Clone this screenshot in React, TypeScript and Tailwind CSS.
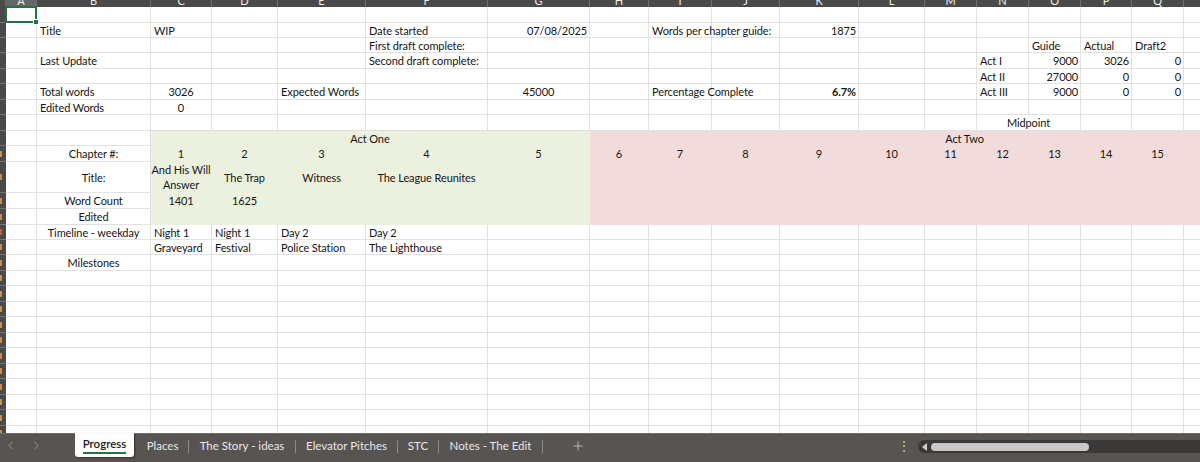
import { Fragment } from "react";
import { ChevronLeft, ChevronRight, Plus } from "lucide-react";

const COLS = ["A", "B", "C", "D", "E", "F", "G", "H", "I", "J", "K", "L", "M", "N", "O", "P", "Q", "R", "S", "T"];
const ROW_COUNT = 27;

type Cell = { t: string; a?: "l" | "c" | "r"; bold?: boolean; span?: string; cols?: number };

const CELLS: Record<string, Cell> = {
  "2B": { t: "Title" },
  "2C": { t: "WIP" },
  "2F": { t: "Date started" },
  "2G": { t: "07/08/2025", a: "r" },
  "2I": { t: "Words per chapter guide:" },
  "2K": { t: "1875", a: "r" },
  "3F": { t: "First draft complete:" },
  "3O": { t: "Guide" },
  "3P": { t: "Actual" },
  "3Q": { t: "Draft2" },
  "4B": { t: "Last Update" },
  "4F": { t: "Second draft complete:" },
  "4N": { t: "Act I" },
  "4O": { t: "9000", a: "r" },
  "4P": { t: "3026", a: "r" },
  "4Q": { t: "0", a: "r" },
  "5N": { t: "Act II" },
  "5O": { t: "27000", a: "r" },
  "5P": { t: "0", a: "r" },
  "5Q": { t: "0", a: "r" },
  "6B": { t: "Total words" },
  "6C": { t: "3026", a: "c" },
  "6E": { t: "Expected Words" },
  "6G": { t: "45000", a: "c" },
  "6I": { t: "Percentage Complete" },
  "6K": { t: "6.7%", a: "r", bold: true },
  "6N": { t: "Act III" },
  "6O": { t: "9000", a: "r" },
  "6P": { t: "0", a: "r" },
  "6Q": { t: "0", a: "r" },
  "7B": { t: "Edited Words" },
  "7C": { t: "0", a: "c" },
  "8N": { t: "Midpoint", a: "c", span: "col-span-2", cols: 2 },
  "9C": { t: "Act One", a: "c", span: "col-span-5", cols: 5 },
  "9H": { t: "Act Two", a: "c", span: "col-span-13", cols: 13 },
  "10B": { t: "Chapter #:", a: "c" },
  "11B": { t: "Title:", a: "c" },
  "11C": { t: "And His Will\nAnswer", a: "c" },
  "11D": { t: "The Trap", a: "c" },
  "11E": { t: "Witness", a: "c" },
  "11F": { t: "The League Reunites", a: "c" },
  "12B": { t: "Word Count", a: "c" },
  "12C": { t: "1401", a: "c" },
  "12D": { t: "1625", a: "c" },
  "13B": { t: "Edited", a: "c" },
  "14B": { t: "Timeline - weekday", a: "c" },
  "14C": { t: "Night 1" },
  "14D": { t: "Night 1" },
  "14E": { t: "Day 2" },
  "14F": { t: "Day 2" },
  "15C": { t: "Graveyard" },
  "15D": { t: "Festival" },
  "15E": { t: "Police Station" },
  "15F": { t: "The Lighthouse" },
  "16B": { t: "Milestones", a: "c" },
};

// chapter numbers 1..15 across C..Q
COLS.slice(2, 17).forEach((l, i) => {
  CELLS[`10${l}`] = { t: String(i + 1), a: "c" };
});

const TABS = [
  { name: "Places", w: "w-[51px]" },
  { name: "The Story - ideas", w: "w-[106px]" },
  { name: "Elevator Pitches", w: "w-[101px]" },
  { name: "STC", w: "w-[40px]" },
  { name: "Notes - The Edit", w: "w-[103px]" },
];

function fillOf(r: number, c: number) {
  if (r < 9 || r > 13) return "";
  if (c >= 2 && c <= 6) return "bg-[#ebf1de] border-[#ebf1de]";
  if (c >= 7) return "bg-[#f2dcdb] border-[#f2dcdb]";
  return "";
}

function SheetRow({ r }: { r: number }) {
  const out = [];
  let skip = 0;
  for (let c = 0; c < COLS.length; c++) {
    if (skip > 0) {
      skip--;
      continue;
    }
    const cell = CELLS[`${r}${COLS[c]}`];
    if (cell?.cols) skip = cell.cols - 1;
    const fill = fillOf(r, c) || "border-[#e1e1e1]";
    const align = cell?.a === "c" ? "justify-center text-center" : cell?.a === "r" ? "justify-end pr-[2px]" : "justify-start pl-[3px]";
    out.push(
      <div
        key={c}
        className={`relative flex items-center whitespace-pre border-r border-b leading-[15px] ${fill} ${align} ${cell?.span ?? ""} ${cell?.bold ? "font-bold" : ""}`}
      >
        {cell?.t}
        {r === 1 && c === 0 && (
          <div className="absolute -inset-px z-10 border-2 border-[#217346]">
            <span className="absolute -right-[4px] -bottom-[4px] h-[6px] w-[6px] border border-white bg-[#217346]" />
          </div>
        )}
      </div>
    );
  }
  return <>{out}</>;
}

export default function App() {
  const rows = Array.from({ length: ROW_COUNT }, (_, i) => i + 1);

  return (
    <div className="h-[462px] w-[1200px] overflow-hidden bg-white font-[Lato,'Noto_Sans',sans-serif] text-[11px] tracking-[-0.1px] text-[#151515]">
      {/* Sheet grid */}
      <div className="h-[433px] overflow-hidden">
        <div className="grid w-max grid-cols-[6px_31px_114px_61px_66px_88px_122px_102px_59px_63px_68px_79px_66px_52px_52px_52px_51px_52px_52px_52px_52px] grid-rows-[7px_16px_15px_15px_16px_15px_16px_15px_16px_15px_16px_31px_16px_16px_15px_15px_16px_15px_16px_15px_16px_15px_16px_15px_16px_15px_16px_15px]">
          <div className="border-r border-[#6f6f6f] bg-[#4a4a4a]" />
          {COLS.map((l, i) => (
            <div
              key={l}
              className={`flex items-end justify-center overflow-hidden border-r border-[#707070] ${i === 0 ? "bg-[#666]" : "bg-[#4a4a4a]"}`}
            >
              <span className="mb-px leading-none text-[#eee]">{l}</span>
            </div>
          ))}
          {rows.map((r) => (
            <Fragment key={r}>
              <div className="flex items-center border-b border-[#747474] bg-[#4a4a4a]">
                {r >= 10 && <span className={`h-[6px] w-[2px] ${r === 14 ? "bg-[#c9574a]" : "bg-[#c98d48]"}`} />}
              </div>
              <SheetRow r={r} />
            </Fragment>
          ))}
        </div>
      </div>

      {/* Sheet tabs bar */}
      <div className="flex h-[29px] border-t border-[#6e6b69] bg-[#575452] text-[11.5px] tracking-normal text-[#e8e8e8]">
        <div className="flex w-[75px] items-start gap-[13px] pt-[5px] pl-[4px] text-[#a9a9a9]">
          <ChevronLeft size={13} strokeWidth={1.5} />
          <ChevronRight size={13} strokeWidth={1.5} />
        </div>
        <div className="-mt-px flex h-[24px] w-[59px] items-center justify-center rounded-b-[3px] bg-white shadow-[1px_1px_2px_rgba(0,0,0,0.4)]">
          <span className="border-b-2 border-[#217346] pb-px font-semibold leading-[14px] text-[#1b1b1b]">Progress</span>
        </div>
        <div className="ml-[3px] flex items-start">
          {TABS.map((tab) => (
            <div key={tab.name} className="flex items-start pt-[5px]">
              <div className={`${tab.w} text-center leading-[14px]`}>{tab.name}</div>
              <span className="mt-px h-[13px] w-px bg-[#8c8986]" />
            </div>
          ))}
        </div>
        <div className="flex w-[70px] items-start justify-center pt-[5px] text-[#d8d8d8]">
          <Plus size={14} strokeWidth={1.25} />
        </div>
        <div className="flex-1" />
        <div className="flex w-[14px] items-start justify-center pt-[6px] text-[12px] leading-[12px] text-[#cfcfcf]">⋮</div>
        <div className="mt-[6px] ml-[7px] flex h-[13px] w-[282px] items-center rounded-l-full bg-[#3b3938] pl-[4px]">
          <span className="h-0 w-0 border-y-[4px] border-r-[5px] border-y-transparent border-r-[#d0d0d0]" />
          <span className="ml-[4px] h-[8px] w-[158px] rounded-full bg-[#c8c8c8]" />
        </div>
      </div>
    </div>
  );
}
